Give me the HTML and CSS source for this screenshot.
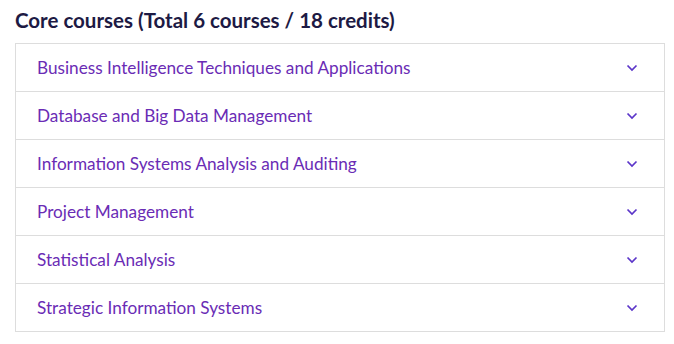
FILE: index.html
```html
<!DOCTYPE html>
<html lang="en">
<head>
<meta charset="utf-8">
<link rel="stylesheet" href="styles.css">
</head>
<body>
<section class="courses">
  <h2 class="courses-title">Core courses (Total 6 courses / 18 credits)</h2>
  <ul class="accordion">
    <li class="acc-item"><span class="acc-label">Business Intelligence Techniques and Applications</span><svg class="chev" viewBox="0 0 12 8" width="12" height="8"><path d="M1.5 1.5 L6 6 L10.5 1.5" fill="none" stroke="currentColor" stroke-width="1.7"/></svg></li>
    <li class="acc-item"><span class="acc-label">Database and Big Data Management</span><svg class="chev" viewBox="0 0 12 8" width="12" height="8"><path d="M1.5 1.5 L6 6 L10.5 1.5" fill="none" stroke="currentColor" stroke-width="1.7"/></svg></li>
    <li class="acc-item"><span class="acc-label">Information Systems Analysis and Auditing</span><svg class="chev" viewBox="0 0 12 8" width="12" height="8"><path d="M1.5 1.5 L6 6 L10.5 1.5" fill="none" stroke="currentColor" stroke-width="1.7"/></svg></li>
    <li class="acc-item"><span class="acc-label">Project Management</span><svg class="chev" viewBox="0 0 12 8" width="12" height="8"><path d="M1.5 1.5 L6 6 L10.5 1.5" fill="none" stroke="currentColor" stroke-width="1.7"/></svg></li>
    <li class="acc-item"><span class="acc-label">Statistical Analysis</span><svg class="chev" viewBox="0 0 12 8" width="12" height="8"><path d="M1.5 1.5 L6 6 L10.5 1.5" fill="none" stroke="currentColor" stroke-width="1.7"/></svg></li>
    <li class="acc-item"><span class="acc-label">Strategic Information Systems</span><svg class="chev" viewBox="0 0 12 8" width="12" height="8"><path d="M1.5 1.5 L6 6 L10.5 1.5" fill="none" stroke="currentColor" stroke-width="1.7"/></svg></li>
  </ul>
</section>
</body>
</html>
```
FILE: styles.css
```css
html, body {
  margin: 0;
  padding: 0;
  background: #ffffff;
}
body {
  font-family: Lato, "Open Sans", sans-serif;
}
.courses {
  padding: 8px 10px 0 15px;
}
.courses-title {
  margin: 0 0 11px 0;
  font-size: 20.5px;
  line-height: 24px;
  font-weight: 700;
  color: #1d1a44;
}
.accordion {
  list-style: none;
  margin: 0;
  padding: 0;
  width: 648px;
  border: 1px solid #dddddd;
}
.acc-item {
  display: flex;
  align-items: center;
  justify-content: space-between;
  height: 47px;
  padding: 0 26px 0 21px;
  border-top: 1px solid #dddddd;
  color: #6a2cb5;
  font-size: 17.2px;
}
.acc-item:first-child {
  border-top: none;
}
.acc-label {
  line-height: 20px;
}
.chev {
  color: #5b35c9;
  display: block;
}
```
